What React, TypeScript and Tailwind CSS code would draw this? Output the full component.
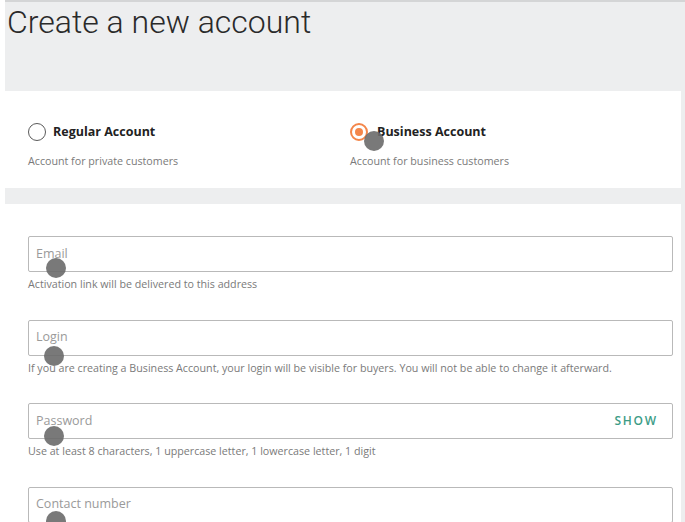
import React from "react";

const Dot = ({ x, y }: { x: number; y: number }) => (
  <span
    className="absolute w-[20px] h-[20px] rounded-full bg-[#6a6a6a]/90 pointer-events-none"
    style={{ left: x - 10, top: y - 10 }}
  />
);

const Field = ({
  label,
  hint,
  show,
}: {
  label: string;
  hint?: string;
  show?: boolean;
}) => (
  <div className="flex flex-col shrink-0">
    <div className="h-[36px] border border-[#b9b9b9] rounded-[2px] flex items-center justify-between px-[7px] bg-white">
      <span className="text-[12.5px] text-[#9a9a9a]">{label}</span>
      {show && (
        <span className="text-[12px] font-semibold tracking-[0.15em] text-[#3c9c86] mr-[7px]">
          SHOW
        </span>
      )}
    </div>
    {hint && (
      <p className="text-[10.7px] text-[#7a7a7a] mt-[5px] leading-[14px] whitespace-nowrap">{hint}</p>
    )}
  </div>
);

export default function App() {
  return (
    <div className="relative w-[685px] h-[522px] overflow-hidden bg-white font-['Open_Sans',sans-serif]">
      <div className="ml-[5px] h-full bg-[#edeeef] border-t-2 border-[#d4d5d6] flex flex-col">
        <div className="h-[89px] shrink-0 pl-[2px]">
          <h1 className="font-['Roboto',sans-serif] font-light text-[32px] leading-[36px] text-[#2a2a2a] mt-[2px]">
            Create a new account
          </h1>
        </div>

        <div className="mr-[4px] h-[97px] shrink-0 bg-white flex pl-[23px] pt-[32px]">
          <div className="flex flex-col w-[322px]">
            <div className="flex items-center gap-[7px]">
              <span className="w-[18px] h-[18px] rounded-full border border-[#5a5a5a]" />
              <span className="text-[12.5px] font-bold text-[#222]">Regular Account</span>
            </div>
            <p className="text-[10.7px] text-[#7a7a7a] mt-[11px]">Account for private customers</p>
          </div>
          <div className="flex flex-col">
            <div className="flex items-center gap-[9px]">
              <span className="w-[18px] h-[18px] rounded-full border-2 border-[#f4864a] flex items-center justify-center">
                <span className="w-[8px] h-[8px] rounded-full bg-[#f4864a]" />
              </span>
              <span className="text-[12.5px] font-bold text-[#222]">Business Account</span>
            </div>
            <p className="text-[10.7px] text-[#7a7a7a] mt-[11px]">Account for business customers</p>
          </div>
        </div>

        <div className="mr-[4px] mt-[16px] flex-1 bg-white pl-[23px] pr-[8px] pt-[32px] flex flex-col gap-[28.5px]">
          <Field label="Email" hint="Activation link will be delivered to this address" />
          <Field
            label="Login"
            hint="If you are creating a Business Account, your login will be visible for buyers. You will not be able to change it afterward."
          />
          <Field
            label="Password"
            hint="Use at least 8 characters, 1 uppercase letter, 1 lowercase letter, 1 digit"
            show
          />
          <Field label="Contact number" />
        </div>
      </div>

      <Dot x={374} y={141} />
      <Dot x={56} y={268} />
      <Dot x={54} y={356} />
      <Dot x={54} y={436} />
      <Dot x={56} y={521} />
    </div>
  );
}
